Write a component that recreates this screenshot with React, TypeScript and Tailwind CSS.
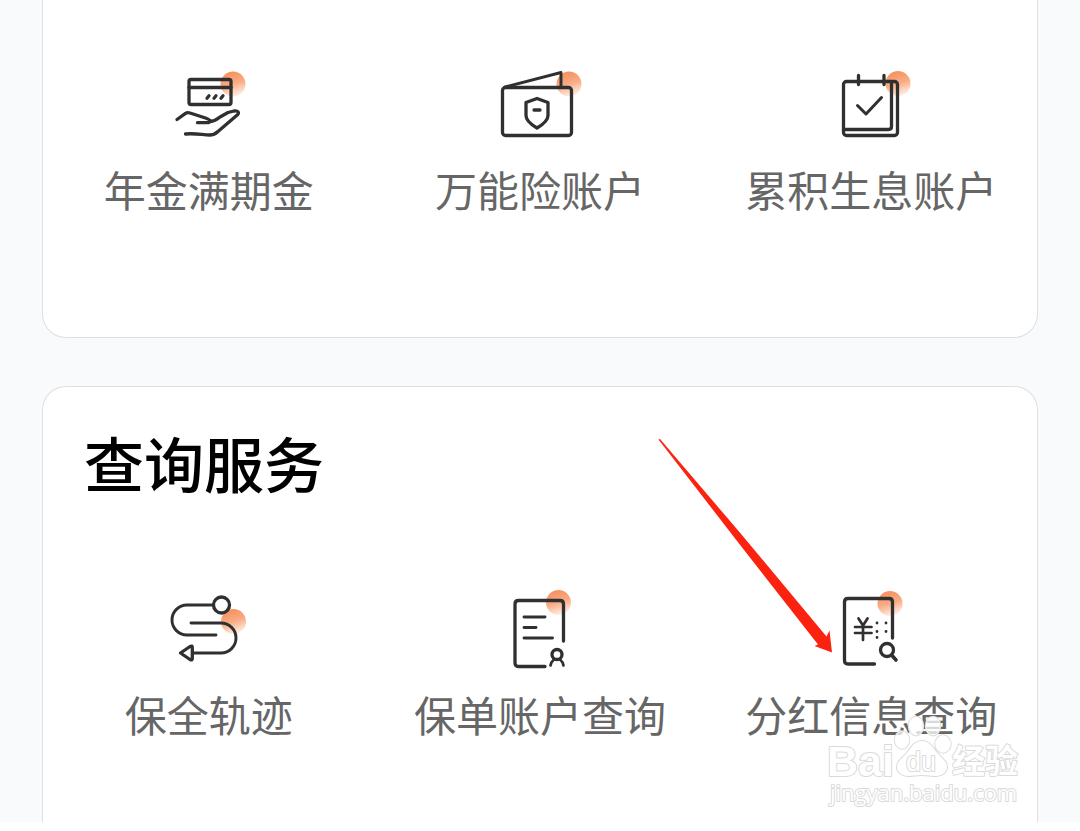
import type { ReactNode } from 'react';

interface Service {
  name: string;
  icon: ReactNode;
}

interface IconProps {
  viewBox: string;
  dot: [number, number];
  children: ReactNode;
}

function ServiceIcon({ viewBox, dot, children }: IconProps) {
  return (
    <svg
      viewBox={viewBox}
      className="w-[100px] h-[100px]"
      fill="none"
      stroke="#303030"
      strokeWidth="3.3"
      strokeLinecap="round"
      strokeLinejoin="round"
      aria-hidden="true"
    >
      <circle cx={dot[0]} cy={dot[1]} r="12.5" fill="url(#dot)" stroke="none" />
      {children}
    </svg>
  );
}

const accountServices: Service[] = [
  {
    name: '年金满期金',
    icon: (
      <ServiceIcon viewBox="-1 0 100 100" dot={[73, 24]}>
        <rect x="29" y="19.5" width="42" height="25" rx="2" />
        <path d="M29 27.5h42" />
        <path d="M47 38.2l2-2.4M54 38.2l2-2.4M61 38.2l2-2.4" />
        <path d="M17 59.5l8.5-6.2q2-1.2 4.5-.3l15.5 5q5 1.7 4.500 3.300-.4 1.400-3 1.400H37.500M50 61.500c4-.3 7-2 10-4.500l8-4.500 6-1.500c4-.7 5.500 1.500 3.500 3.800L58 71.500c-3 3-5 3.500-8.500 3.500-6.500 0-14-2-24-1" />
      </ServiceIcon>
    ),
  },
  {
    name: '万能险账户',
    icon: (
      <ServiceIcon viewBox="0 0 100 100" dot={[79, 24]}>
        <rect x="12.5" y="27.5" width="69" height="48" rx="3" />
        <path d="M15 27l56-14.5v15" strokeWidth="2.9" />
        <path d="M47 38.5l11 4v13c0 5-5 9-11 12.500-6-3.500-11-7.500-11-12.500v-13z" />
        <path d="M44 50h6" />
      </ServiceIcon>
    ),
  },
  {
    name: '累积生息账户',
    icon: (
      <ServiceIcon viewBox="-9 0 100 100" dot={[68, 23.5]}>
        <rect x="13.5" y="21.5" width="54" height="54" rx="3" />
        <path d="M61.5 22v44.5q0 3-3 3H14M28.5 15.5v9M54 15.5v9" />
        <path d="M27.5 45.5l8.500 8.500 15.500-16.500" strokeWidth="3" />
      </ServiceIcon>
    ),
  },
];

const queryServices: Service[] = [
  {
    name: '保全轨迹',
    icon: (
      <ServiceIcon viewBox="-1 5 100 100" dot={[73.5, 41.5]}>
        <circle cx="61.5" cy="25" r="8" />
        <path d="M53.5 25H27a15 15 0 0 0 0 30h29M31 43h30a15 15 0 0 1 0 30H33" strokeWidth="2.9" />
        <path d="M20.5 73l9.500-6.500q2.300-1.300 2.300 1v11q0 2.300-2.300 1z" />
      </ServiceIcon>
    ),
  },
  {
    name: '保单账户查询',
    icon: (
      <ServiceIcon viewBox="-9 5 100 100" dot={[59.5, 22.5]}>
        <path d="M64.5 61V24q0-3.500-3.500-3.500H19.500q-3.500 0-3.500 3.500v59q0 3.500 3.500 3.500H46" />
        <path d="M25 37h21M25 47.500h12M25 58h28.500" strokeWidth="2.9" />
        <circle cx="58" cy="74.5" r="5" />
        <path d="M51.500 85.500q.5-3.500 3.500-6M64.500 85.500q-.5-3.500-3.500-6" strokeWidth="2.7" />
      </ServiceIcon>
    ),
  },
  {
    name: '分红信息查询',
    icon: (
      <ServiceIcon viewBox="21 6 100 100" dot={[90, 24.5]}>
        <path d="M92.500 59V23q0-3.500-3.500-3.500H48q-3.500 0-3.500 3.500v58.500q0 3.500 3.500 3.500h26.500" />
        <path d="M58.500 39.500l4.500 7 4.500-7M63 46.500v14.500M55 48h16.500M55 54h16.500" strokeWidth="2.7" />
        <path d="M77 44h.01M86 44h.01M77 52.500h.01M86 52.500h.01M77 58.500h.01" strokeWidth="2.8" />
        <circle cx="87" cy="71" r="6.5" />
        <path d="M92 76.500l4 4.500" strokeWidth="3.6" />
      </ServiceIcon>
    ),
  },
];

function ServiceGrid({ services }: { services: Service[] }) {
  return (
    <ul className="grid grid-cols-3">
      {services.map((service) => (
        <li key={service.name}>
          <a href="#" className="flex flex-col items-center text-[42px] leading-[58px] text-[#666] whitespace-nowrap">
            {service.icon}
            {service.name}
          </a>
        </li>
      ))}
    </ul>
  );
}

function Arrow() {
  return (
    <svg
      viewBox="0 0 180 220"
      className="absolute top-[50px] right-[202px] w-[180px] h-[220px] pointer-events-none"
      aria-hidden="true"
    >
      <path d="M3.500 2.500L5 2l81.500 95.500 85 102 3-6 2.500 22-17.500-6.500 3.500-1.500L80.500 102z" fill="#fb2210" />
    </svg>
  );
}

function Watermark() {
  return (
    <svg
      viewBox="0 0 200 100"
      className="absolute right-[13px] bottom-3 w-[200px] h-[100px] pointer-events-none"
      fill="#fff"
      stroke="#dadada"
      strokeWidth="2"
      strokeLinejoin="round"
      paintOrder="stroke"
      fontFamily="'Open Sans', 'Noto Sans CJK SC', sans-serif"
    >
      <g fillOpacity="0.75" strokeWidth="1.5">
        <ellipse cx="78" cy="30" rx="7.5" ry="9" />
        <ellipse cx="92" cy="16" rx="7.5" ry="9.5" />
        <ellipse cx="109" cy="16" rx="7.5" ry="9.5" />
        <ellipse cx="119" cy="34" rx="8" ry="9" />
      </g>
      <path
        d="M98 31c8 0 11 7 16 13 5 5 9 8 9 13s-5 9-11 9c-5 0-9-1-14-1s-9 1-14 1c-6 0-11-4-11-9s4-8 9-13c5-6 8-13 16-13z"
        strokeWidth="2"
      />
      <text x="3" y="66" fontSize="43" fontWeight="700" fontFamily="'Liberation Sans', sans-serif">Bai</text>
      <text x="82" y="61" fontSize="27" fontFamily="'Liberation Sans', sans-serif">du</text>
      <text x="128" y="63" fontSize="33" fontWeight="700">经验</text>
      <text x="6" y="91" fontSize="22">jingyan.baidu.com</text>
    </svg>
  );
}

export default function App() {
  return (
    <div className="bg-white font-['Noto_Sans_CJK_SC',sans-serif]">
      {/* Shared gradient for the orange dots */}
      <svg className="absolute w-0 h-0" aria-hidden="true">
        <defs>
          <linearGradient id="dot" x1="0.3" y1="0" x2="0.6" y2="1">
            <stop offset="0.1" stopColor="#f79463" />
            <stop offset="0.5" stopColor="#f9ab84" />
            <stop offset="1" stopColor="#fff1e9" />
          </linearGradient>
        </defs>
      </svg>

      <main className="flex flex-col gap-12 px-[42px] bg-[#f8fafc]">
        <section className="pt-[60px] pb-[119px] bg-white border border-t-0 border-[#dcdfe3] rounded-b-3xl">
          <ServiceGrid services={accountServices} />
        </section>

        <section className="relative pt-[35px] pb-[79px] bg-white border border-b-0 border-[#dcdfe3] rounded-t-3xl">
          <h2 className="px-[41px] mb-[83px] text-[60px] leading-[80px] font-medium text-black">查询服务</h2>
          <ServiceGrid services={queryServices} />
          <Arrow />
          <Watermark />
        </section>
      </main>
    </div>
  );
}
